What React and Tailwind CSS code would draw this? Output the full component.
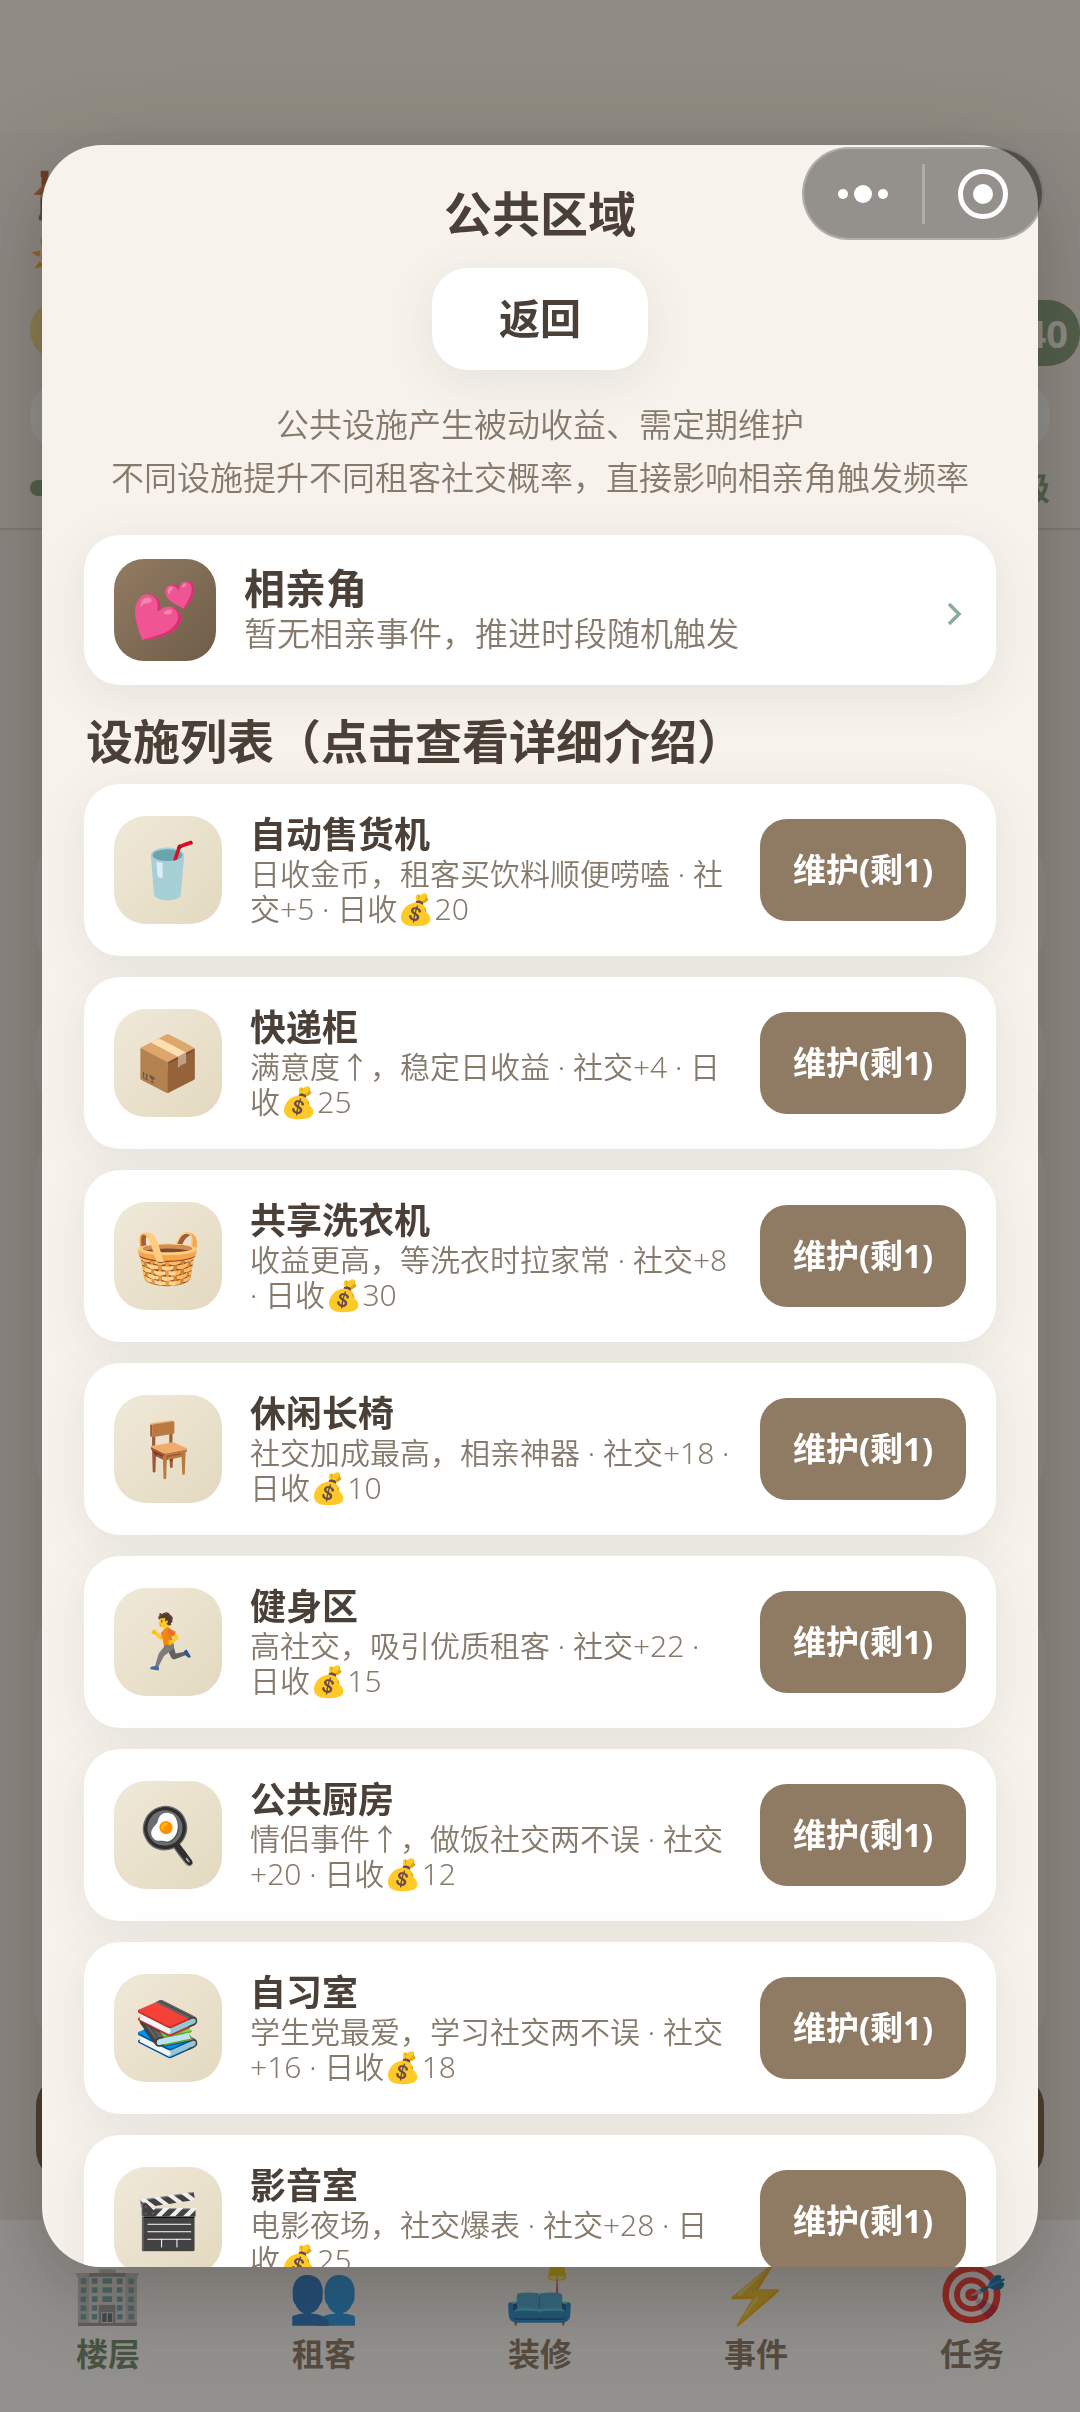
const facilities = [
  { icon: '🥤', name: '自动售货机', lines: ['日收金币，租客买饮料顺便唠嗑 · 社', '交+5 · 日收💰20'] },
  { icon: '📦', name: '快递柜', lines: ['满意度↑，稳定日收益 · 社交+4 · 日', '收💰25'] },
  { icon: '🧺', name: '共享洗衣机', lines: ['收益更高，等洗衣时拉家常 · 社交+8', '· 日收💰30'] },
  { icon: '🪑', name: '休闲长椅', lines: ['社交加成最高，相亲神器 · 社交+18 ·', '日收💰10'] },
  { icon: '🏃', name: '健身区', lines: ['高社交，吸引优质租客 · 社交+22 ·', '日收💰15'] },
  { icon: '🍳', name: '公共厨房', lines: ['情侣事件↑，做饭社交两不误 · 社交', '+20 · 日收💰12'] },
  { icon: '📚', name: '自习室', lines: ['学生党最爱，学习社交两不误 · 社交', '+16 · 日收💰18'] },
  { icon: '🎬', name: '影音室', lines: ['电影夜场，社交爆表 · 社交+28 · 日', '收💰25'] },
];

const tabs = [
  { icon: '🏢', label: '楼层', active: true },
  { icon: '👥', label: '租客' },
  { icon: '🛋️', label: '装修' },
  { icon: '⚡', label: '事件' },
  { icon: '🎯', label: '任务' },
];

const cardShadow = 'shadow-[0_10px_48px_rgba(70,100,75,0.1)]';

function Backdrop() {
  return (
    <div className="flex min-h-screen flex-col bg-[#f3ece7]">
      <div className="h-[132px] bg-[#fbf5e9]" />
      <header className="h-[398px] border-b-2 border-[#d8d0c6] bg-[#f6efe9] px-[30px] pt-5">
        <div className="text-[54px] leading-[80px]">🏠</div>
        <div className="mt-1 text-[36px] leading-[40px]">☀️</div>
        <div className="mt-6 flex justify-between">
          <div className="h-[60px] w-60 rounded-full bg-[#f0d684]" />
          <div className="-mr-[30px] flex h-[66px] w-48 items-center justify-end rounded-[32px] bg-[#7c9a78] pr-3 text-[38px] leading-[60px] font-bold text-white/90">
            40
          </div>
        </div>
        <div className="mt-4 h-[68px] rounded-[32px] bg-white" />
        <div className="mt-4 flex items-center justify-between">
          <div className="h-4 w-60 rounded-full bg-[#7c9a78]" />
          <div className="text-[32px] leading-[44px] font-bold text-[#7c9a78]">升级</div>
        </div>
      </header>
      <main className="flex flex-1 flex-col px-9 pt-[310px]">
        <div className="h-[128px] rounded-[32px] bg-white/60" />
        <div className="mt-10 h-[100px] rounded-[32px] bg-white/60" />
        <div className="mt-7 h-[360px] rounded-[32px] bg-white/60" />
        <div className="mt-[116px] h-[430px] rounded-[32px] bg-white/60" />
        <div className="mt-8 h-[108px] rounded-[32px] bg-[#6b543c]" />
      </main>
      <nav className="grid h-[192px] grid-cols-5 bg-white pt-9">
        {tabs.map((t) => (
          <button
            key={t.label}
            type="button"
            className={`flex flex-col items-center justify-start font-bold ${t.active ? 'text-[#6a8767]' : 'text-[#84735f]'}`}
          >
            <span className="text-[57px] leading-[72px]">{t.icon}</span>
            <span className="mt-1 text-[32px] leading-[44px]">{t.label}</span>
          </button>
        ))}
      </nav>
    </div>
  );
}

function Capsule() {
  return (
    <div className="fixed top-[147px] right-9 flex h-[93px] w-[242px] items-center rounded-full border-2 border-white/25 bg-black/40">
      <button type="button" aria-label="更多" className="flex h-full flex-1 items-center justify-center gap-[6px]">
        <span className="size-[10px] rounded-full bg-white" />
        <span className="size-[18px] rounded-full bg-white" />
        <span className="size-[10px] rounded-full bg-white" />
      </button>
      <span className="h-[60px] w-[3px] bg-white/25" />
      <button type="button" aria-label="关闭" className="flex h-full flex-1 items-center justify-center">
        <span className="flex size-[50px] items-center justify-center rounded-full border-[5px] border-white">
          <span className="size-5 rounded-full bg-white" />
        </span>
      </button>
    </div>
  );
}

function Facility({ icon, name, lines }) {
  return (
    <li className={`flex h-[172px] shrink-0 items-center rounded-[36px] bg-white px-[30px] ${cardShadow}`}>
      <div className="flex size-[108px] shrink-0 items-center justify-center rounded-[32px] bg-linear-to-br from-[#f0e9d9] to-[#e3d9bf] pb-1 text-[54px] leading-none">
        {icon}
      </div>
      <div className="ml-7 min-w-0 flex-1 whitespace-nowrap">
        <h3 className="text-[36px] leading-[42px] font-bold text-[#4a4038]">{name}</h3>
        <p className="text-[30px] leading-[35px] font-[350] text-[#857a6b]">
          {lines[0]}
          <br />
          {lines[1]}
        </p>
      </div>
      <button
        type="button"
        className="h-[102px] w-[206px] shrink-0 rounded-[27px] bg-[#8f7a63] text-[33px] font-bold text-white"
      >
        维护(剩1)
      </button>
    </li>
  );
}

export default function App() {
  return (
    <div className="font-['Noto_Sans','Noto_Sans_CJK_SC','Noto_Color_Emoji',sans-serif]">
      <Backdrop />
      <div className="fixed inset-0 flex items-center justify-center bg-[#28231e]/50 px-[42px]">
        <section
          role="dialog"
          aria-label="公共区域"
          className="flex h-[88vh] w-full flex-col overflow-hidden rounded-[60px] bg-[#f7f2ec] px-[42px] pt-10 shadow-[0_24px_90px_rgba(50,44,36,0.35)]"
        >
          <div className="flex flex-col items-center">
            <h1 className="text-[48px] leading-[58px] font-bold text-[#4a4038]">公共区域</h1>
            <button
              type="button"
              className={`mt-[25px] h-[102px] w-[216px] rounded-[36px] bg-white text-[41px] font-bold text-[#4a4038] ${cardShadow}`}
            >
              返回
            </button>
            <p className="mt-7 text-center text-[33px] leading-[53px] font-[350] whitespace-nowrap text-[#857a6b]">
              公共设施产生被动收益、需定期维护
              <br />
              不同设施提升不同租客社交概率，直接影响相亲角触发频率
            </p>
          </div>
          <button
            type="button"
            className={`mt-[31px] flex h-[150px] shrink-0 items-center rounded-[36px] bg-white px-[30px] text-left ${cardShadow}`}
          >
            <span className="flex size-[102px] shrink-0 items-center justify-center rounded-[30px] bg-linear-to-br from-[#927b62] to-[#6f5d49] pb-1 text-[54px] leading-none">
              💕
            </span>
            <span className="ml-7 flex flex-1 flex-col">
              <span className="text-[41px] leading-[48px] font-bold text-[#4a4038]">相亲角</span>
              <span className="text-[33px] leading-[44px] font-[350] text-[#857a6b]">暂无相亲事件，推进时段随机触发</span>
            </span>
            <svg viewBox="0 0 24 24" className="mt-2 size-6" fill="none" stroke="#8fab9b" strokeWidth="3.6">
              <path d="M7 2l10 10L7 22" />
            </svg>
          </button>
          <h2 className="mt-7 px-[2px] text-[47px] leading-[56px] font-bold text-[#4a4038]">
            设施列表（点击查看详细介绍）
          </h2>
          <ul className="mt-[15px] flex flex-col gap-[21px]">
            {facilities.map((f) => (
              <Facility key={f.name} {...f} />
            ))}
          </ul>
        </section>
      </div>
      <Capsule />
    </div>
  );
}
